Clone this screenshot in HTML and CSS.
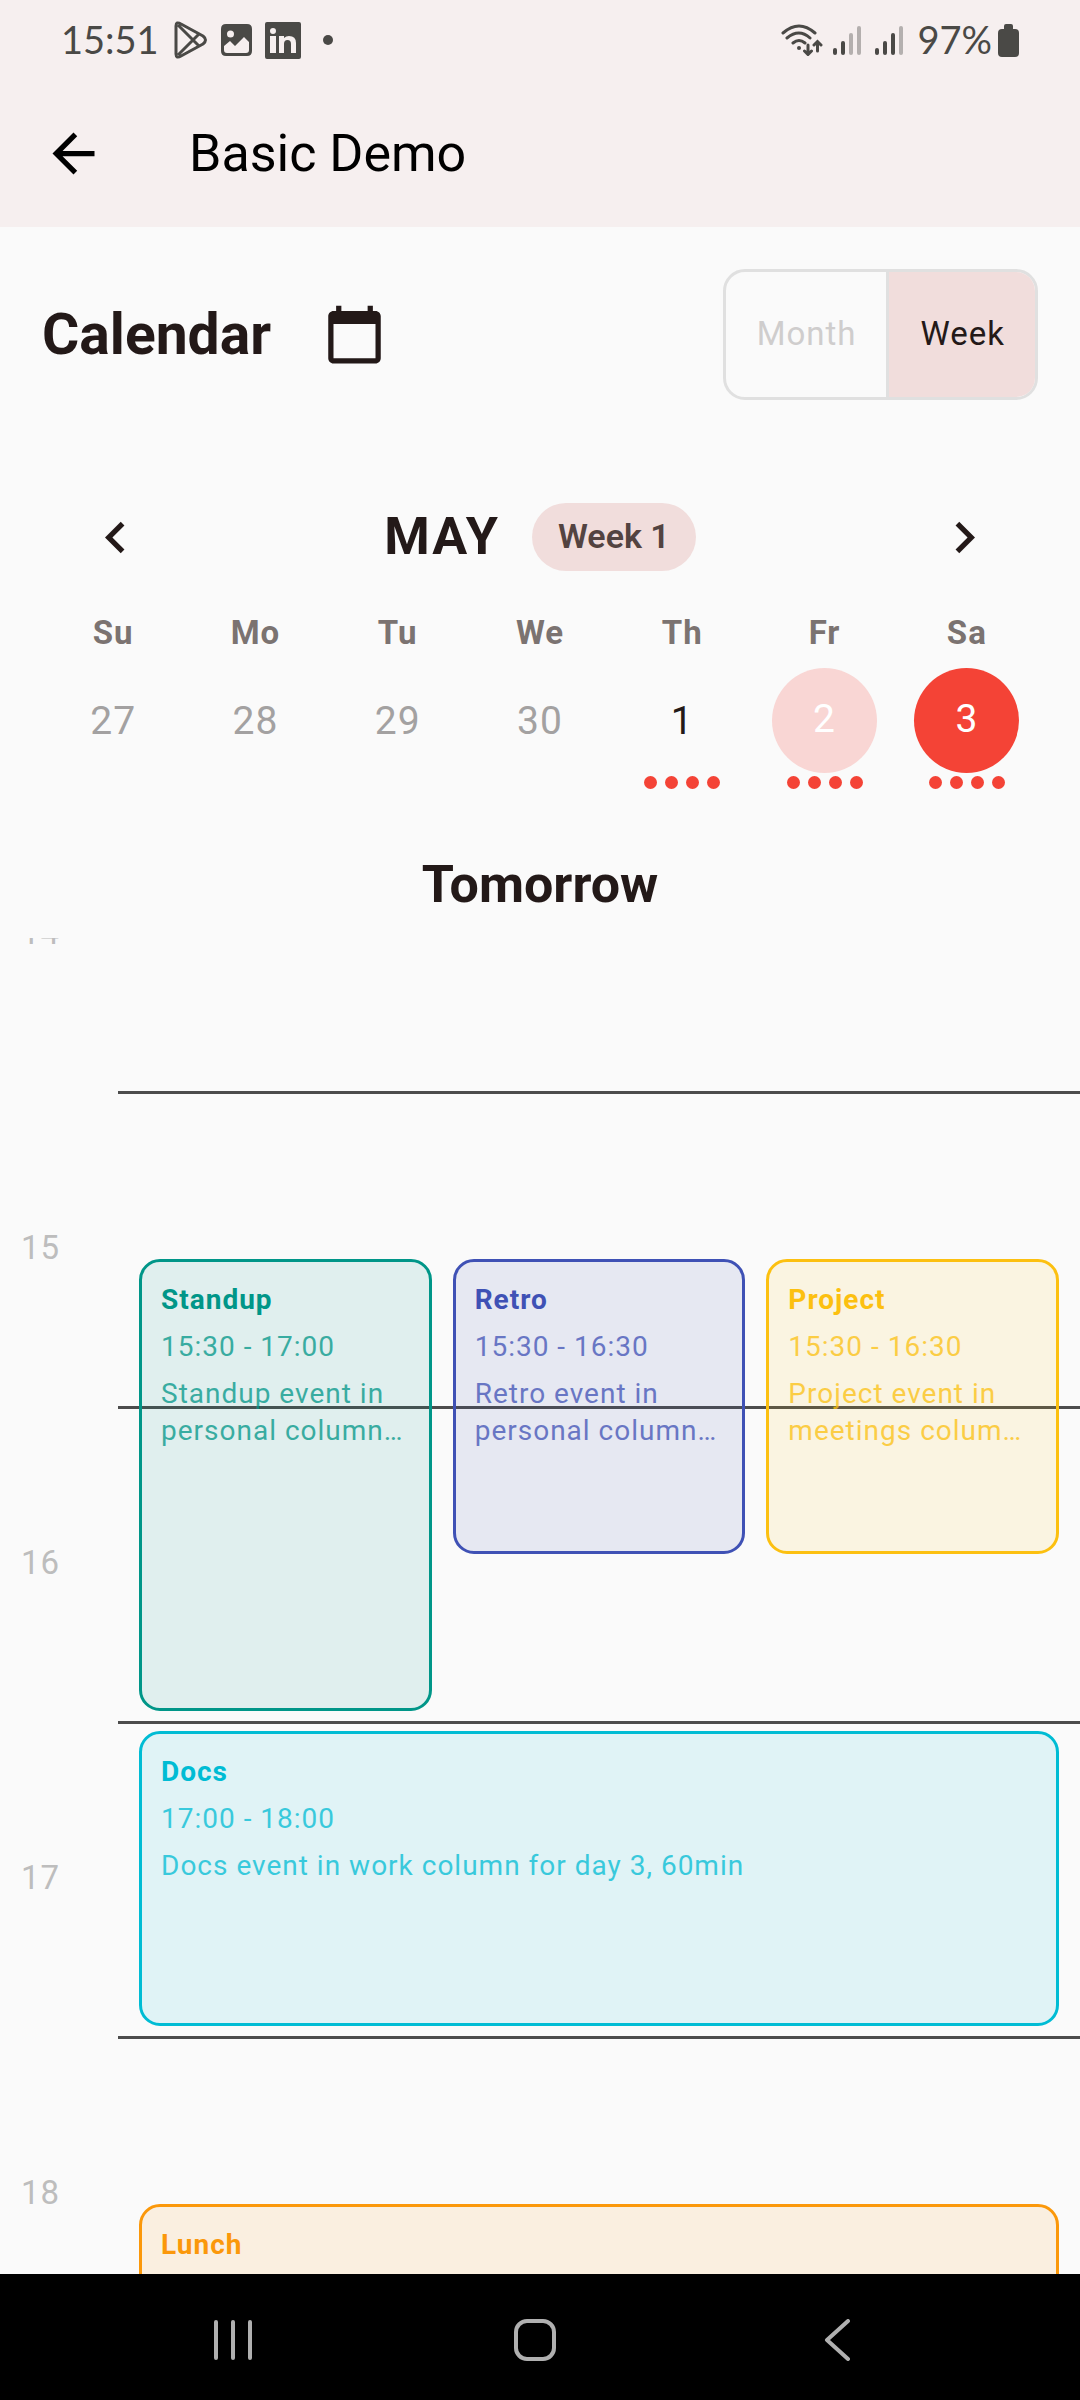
FILE: index.html
```html
<!DOCTYPE html>
<html lang="en">
<head>
<meta charset="utf-8">
<meta name="viewport" content="width=device-width, initial-scale=1">
<title>Basic Demo</title>
<link rel="stylesheet" href="styles.css">
</head>
<body>
<div class="screen">
  <div class="status-bar">
    <span class="status-text">15:51</span>
    <div class="status-notes">
      <svg width="34" height="38" viewBox="0 0 34 38" fill="none" stroke="currentColor" stroke-width="3" stroke-linejoin="round"><path d="M2 5Q2 0 7 3L29 15Q34 19 29 23L7 35Q2 38 2 33ZM4 4L25 25M4 34L25 13"/></svg>
      <svg width="31" height="32" viewBox="0 0 31 32"><path fill="currentColor" fill-rule="evenodd" d="M5 0H26Q31 0 31 5V27Q31 32 26 32H5Q0 32 0 27V5Q0 0 5 0ZM3 22V26Q3 29 6 29H25Q28 29 28 26V18L23 13L14 22L9 17ZM9.500 6.500A3.500 3.500 0 1 0 9.500 13.500A3.500 3.500 0 1 0 9.500 6.500Z"/></svg>
      <svg width="36" height="37" viewBox="0 0 36 37"><path fill="currentColor" fill-rule="evenodd" d="M2 0H34Q36 0 36 2V35Q36 37 34 37H2Q0 37 0 35V2Q0 0 2 0ZM5 14V31H11V14ZM8 6A3 3 0 1 0 8 12A3 3 0 1 0 8 6ZM14 14V31H19V22Q19 18 22.500 18Q26 18 26 22V31H31V21Q31 14 24 14Q21 14 19 16V14Z"/></svg>
      <span class="status-dot"></span>
    </div>
    <div class="status-icons">
      <svg width="42" height="32" viewBox="0 0 42 32" fill="none" stroke="currentColor" stroke-width="3" stroke-linecap="round"><path d="M2 9Q18-5 34 9M6 14Q18 4 29 14M12 19Q18 14 24 19M27 21V30M23.500 27L27 30.500L30.500 27M36.500 27V19M33 21L36.500 17.500L40 21"/><circle cx="18" cy="24" r="2" fill="currentColor" stroke="none"/></svg>
      <svg width="28" height="29" viewBox="0 0 28 29" fill="currentColor"><rect y="22" width="4" height="7" rx="2"/><rect x="8" y="15" width="4" height="14" rx="2"/><g opacity=".38"><rect x="16" y="7" width="4" height="22" rx="2"/><rect x="24" width="4" height="29" rx="2"/></g></svg>
      <svg class="second-signal" width="28" height="29" viewBox="0 0 28 29" fill="currentColor"><rect y="22" width="4" height="7" rx="2"/><rect x="8" y="15" width="4" height="14" rx="2"/><rect x="16" y="7" width="4" height="22" rx="2"/><rect x="24" width="4" height="29" rx="2" opacity=".38"/></svg>
      <span class="status-text">97%</span>
      <svg width="21" height="33" viewBox="0 0 21 33"><path fill="currentColor" d="M8 0H13Q15 0 15 2V5H17Q21 5 21 9V29Q21 33 17 33H4Q0 33 0 29V9Q0 5 4 5H6V2Q6 0 8 0Z"/></svg>
    </div>
  </div>

  <header class="app-bar">
    <button class="icon-button" aria-label="Back"><svg class="icon" viewBox="0 0 24 24"><path d="M20 11H7.830l5.590-5.590L12 4l-8 8 8 8 1.410-1.410L7.830 13H20v-2z"/></svg></button>
    <h1 class="app-title">Basic Demo</h1>
  </header>

  <main class="content">
    <div class="toolbar">
      <h2 class="toolbar-title">Calendar</h2>
      <button class="icon-button" aria-label="Go to today"><svg class="icon" viewBox="0 0 24 24"><path d="M20 3h-1V1h-2v2H7V1H5v2H4c-1.100 0-2 .9-2 2v16c0 1.100.9 2 2 2h16c1.100 0 2-.9 2-2V5c0-1.100-.9-2-2-2zm0 18H4V8h16v13z"/></svg></button>
      <div class="view-toggle" role="group" aria-label="View">
        <button class="view-option" aria-pressed="false">Month</button>
        <button class="view-option active" aria-pressed="true">Week</button>
      </div>
    </div>

    <div class="month-row">
      <button class="icon-button" aria-label="Previous week"><svg class="icon" viewBox="0 0 24 24"><path d="M15.410 7.410 14 6l-6 6 6 6 1.410-1.410L10.830 12z"/></svg></button>
      <div class="month-label"><span class="month-name">MAY</span><span class="week-chip">Week 1</span></div>
      <button class="icon-button" aria-label="Next week"><svg class="icon" viewBox="0 0 24 24"><path d="M10 6 8.590 7.410 13.170 12l-4.580 4.590L10 18l6-6z"/></svg></button>
    </div>

    <div class="week">
      <div class="day"><span class="weekday">Su</span><button class="date outside">27</button></div>
      <div class="day"><span class="weekday">Mo</span><button class="date outside">28</button></div>
      <div class="day"><span class="weekday">Tu</span><button class="date outside">29</button></div>
      <div class="day"><span class="weekday">We</span><button class="date outside">30</button></div>
      <div class="day"><span class="weekday">Th</span><button class="date">1</button><span class="dots"><i></i><i></i><i></i><i></i></span></div>
      <div class="day"><span class="weekday">Fr</span><button class="date today">2</button><span class="dots"><i></i><i></i><i></i><i></i></span></div>
      <div class="day"><span class="weekday">Sa</span><button class="date selected">3</button><span class="dots"><i></i><i></i><i></i><i></i></span></div>
    </div>

    <h2 class="day-title">Tomorrow</h2>

    <div class="timeline">
      <div class="timeline-body">
        <div class="hour"><span class="hour-label">14</span><span class="hour-slot"></span></div>
        <div class="hour"><span class="hour-label">15</span><span class="hour-slot"></span></div>
        <div class="hour"><span class="hour-label">16</span><span class="hour-slot"></span></div>
        <div class="hour"><span class="hour-label">17</span><span class="hour-slot"></span></div>
        <div class="hour"><span class="hour-label">18</span><span class="hour-slot"></span></div>
        <div class="events">
          <article class="event standup">
            <h3 class="event-title">Standup</h3>
            <p class="event-text">15:30 - 17:00</p>
            <p class="event-text">Standup event in personal column…</p>
          </article>
          <article class="event retro">
            <h3 class="event-title">Retro</h3>
            <p class="event-text">15:30 - 16:30</p>
            <p class="event-text">Retro event in personal column…</p>
          </article>
          <article class="event project">
            <h3 class="event-title">Project</h3>
            <p class="event-text">15:30 - 16:30</p>
            <p class="event-text">Project event in meetings colum…</p>
          </article>
          <article class="event docs">
            <h3 class="event-title">Docs</h3>
            <p class="event-text">17:00 - 18:00</p>
            <p class="event-text">Docs event in work column for day 3, 60min</p>
          </article>
          <article class="event lunch">
            <h3 class="event-title">Lunch</h3>
          </article>
        </div>
      </div>
    </div>
  </main>

  <nav class="nav-bar" aria-label="System">
    <button class="nav-button" aria-label="Recent apps"><svg width="42" height="42" viewBox="0 0 42 42"><path d="M4 3V39M21 3V39M38 3V39"/></svg></button>
    <button class="nav-button" aria-label="Home"><svg width="42" height="42" viewBox="0 0 42 42"><rect x="2" y="2" width="38" height="38" rx="11"/></svg></button>
    <button class="nav-button" aria-label="Back"><svg width="42" height="42" viewBox="0 0 42 42"><path d="M32 2L11 21L32 40"/></svg></button>
  </nav>
</div>
</body>
</html>
```
FILE: styles.css
```css
* {
  box-sizing: border-box;
}

body {
  margin: 0;
  background: #fafafa;
  color: #231918;
  font-family: Roboto, sans-serif;
}

h1, h2, h3, p {
  margin: 0;
}

button {
  padding: 0;
  border: 0;
  background: none;
  color: inherit;
  font: inherit;
}

svg {
  display: block;
}

.screen {
  display: flex;
  flex-direction: column;
  height: 100vh;
}

/* Status bar */
.status-bar {
  display: flex;
  align-items: center;
  height: 80px;
  padding: 0 61px;
  background: #f6efef;
  color: #4a4946;
}

.status-text {
  padding-bottom: 2px;
  font-family: Lato, Roboto, sans-serif;
  font-size: 38px;
  line-height: 44px;
}

.status-notes {
  display: flex;
  align-items: center;
  gap: 13px;
  margin-left: 15px;
}

.status-dot {
  width: 10px;
  height: 10px;
  margin-left: 9px;
  border-radius: 50%;
  background: currentColor;
}

.status-icons {
  display: flex;
  align-items: center;
  gap: 10px;
  margin-left: auto;
}

.status-icons .status-text {
  margin: 0 -4px 0 4px;
}

.second-signal {
  margin-left: 4px;
}

/* App bar */
.app-bar {
  display: flex;
  align-items: center;
  gap: 84px;
  height: 147px;
  padding: 0 42px;
  background: #f6efef;
  color: #000;
}

.app-title {
  font-size: 52px;
  font-weight: 400;
  line-height: 60px;
}

.icon {
  width: 63px;
  height: 63px;
  fill: currentColor;
}

/* Title and view toggle */
.content {
  display: flex;
  flex: 1;
  flex-direction: column;
  min-height: 0;
}

.toolbar {
  display: flex;
  align-items: center;
  padding: 42px 42px 0;
}

.toolbar-title {
  margin-right: 52px;
  font-size: 57px;
  font-weight: 700;
  line-height: 68px;
}

.view-toggle {
  display: flex;
  height: 131px;
  margin-left: auto;
  overflow: hidden;
  border: 3px solid #e0e0e0;
  border-radius: 22px;
}

.view-option {
  padding: 0 30px 2px 31px;
  color: #cfcdcd;
  font-size: 33px;
  letter-spacing: 1px;
}

.view-option.active {
  border-left: 3px solid #e0e0e0;
  background: #f1dddc;
  color: #231918;
}

/* Month navigation */
.month-row {
  display: flex;
  align-items: center;
  justify-content: space-between;
  height: 126px;
  margin-top: 74px;
  padding: 0 84px;
}

.month-label {
  display: flex;
  align-items: center;
  gap: 32px;
}

.month-name {
  font-size: 52px;
  font-weight: 700;
  line-height: 60px;
  letter-spacing: 2px;
}

.week-chip {
  padding: 13px 26px 15px;
  border-radius: 34px;
  background: #f1dddc;
  color: #534341;
  font-size: 34px;
  font-weight: 600;
  line-height: 40px;
}

/* Week strip */
.week {
  display: grid;
  grid-template-columns: repeat(7, 1fr);
  height: 190px;
  padding: 13px 42px 0;
}

.day {
  display: flex;
  flex-direction: column;
  align-items: center;
}

.weekday {
  margin-bottom: 15px;
  color: #7b7371;
  font-size: 33px;
  font-weight: 700;
  line-height: 40px;
  letter-spacing: 1px;
}

.date {
  width: 105px;
  height: 105px;
  border-radius: 50%;
  font-size: 39px;
  letter-spacing: 1px;
}

.date.outside {
  color: #a3a1a1;
}

.date.today,
.date.selected {
  padding-bottom: 4px;
  color: #fff;
}

.date.today {
  background: #f9d6d4;
}

.date.selected {
  background: #f44336;
}

.dots {
  display: flex;
  gap: 8px;
  margin-top: 3px;
}

.dots i {
  width: 13px;
  height: 13px;
  border-radius: 50%;
  background: #f44336;
}

.day-title {
  padding: 65px 0 23px;
  font-size: 52px;
  font-weight: 700;
  line-height: 60px;
  text-align: center;
}

/* Day timeline, scrolled part-way into the 14 o'clock hour */
.timeline {
  flex: 1;
  min-height: 0;
  overflow: hidden;
}

.timeline-body {
  position: relative;
  margin-top: -162px;
}

.hour {
  display: grid;
  grid-template-columns: 97px 1fr;
  align-items: center;
  height: 315px;
  padding-left: 21px;
}

.hour-label {
  padding-bottom: 2px;
  color: #bdbdbd;
  font-size: 33px;
  line-height: 40px;
  letter-spacing: 1px;
}

.hour-slot {
  align-self: stretch;
  border-top: 3px solid #4c4c4c;
}

/* Events lie over the hour lines, one grid row per half hour */
.events {
  position: absolute;
  inset: 0 0 0 118px;
  display: grid;
  grid-template-columns: repeat(3, 1fr);
  grid-template-rows: repeat(10, 1fr);
  column-gap: 21px;
  padding: 0 21px;
}

.event {
  display: flex;
  flex-direction: column;
  gap: 10px;
  min-height: 0;
  margin: 10px 0;
  padding: 19px;
  border: 3px solid;
  border-radius: 21px;
  font-size: 28px;
  line-height: 37px;
  letter-spacing: 1px;
}

.event-title {
  font-size: 28px;
  font-weight: 700;
}

.event-text {
  opacity: .75;
}

.standup {
  grid-area: 4 / 1 / span 3;
  background: rgba(0, 150, 136, .1);
  color: #009688;
}

.retro {
  grid-area: 4 / 2 / span 2;
  background: rgba(63, 81, 181, .1);
  color: #3f51b5;
}

.project {
  grid-area: 4 / 3 / span 2;
  background: rgba(255, 193, 7, .1);
  color: #fcc010;
}

.docs {
  grid-area: 7 / 1 / span 2 / span 3;
  background: rgba(0, 188, 212, .1);
  color: #00bcd4;
}

.lunch {
  grid-area: 10 / 1 / span 1 / span 3;
  background: rgba(255, 152, 0, .1);
  color: #fb980a;
}

/* System navigation */
.nav-bar {
  display: flex;
  align-items: center;
  justify-content: space-around;
  height: 126px;
  padding: 5px 92px 0 82px;
  background: #000;
}

.nav-button svg {
  fill: none;
  stroke: #b0b0b0;
  stroke-linecap: round;
  stroke-linejoin: round;
  stroke-width: 4;
}
```
